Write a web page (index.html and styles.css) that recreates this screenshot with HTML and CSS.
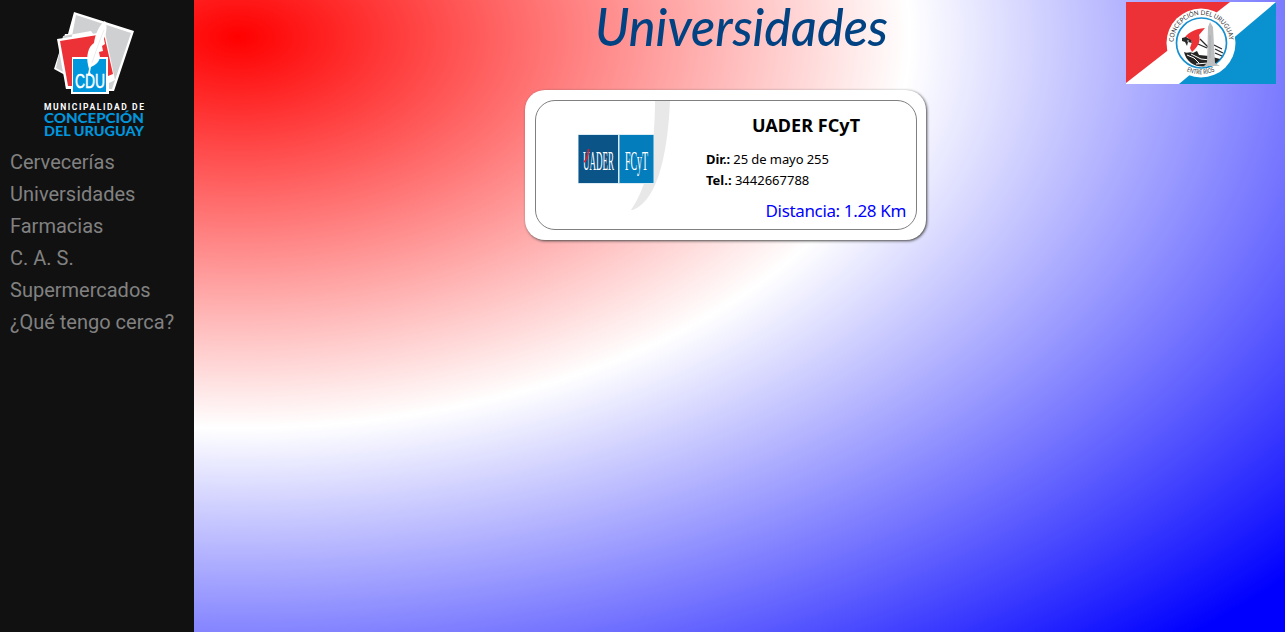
FILE: index.html
```html
<!DOCTYPE html>
<html lang="es">
<head>
<meta charset="utf-8">
<title>Universidades</title>
<link rel="stylesheet" href="styles.css">
</head>
<body>
<div class="page">
  <aside class="sidebar">
    <svg class="logo" viewBox="0 0 120 140" width="120" height="140" role="img" aria-label="Municipalidad de Concepción del Uruguay">
      <path d="M39 7 99 26 77 85 74 90H24V84L29 72 20 67 24 35 32 33Z" fill="#111"/>
      <path d="M39 7 99 26 79 86H73V89H36V84H31L30 70L19 64L30 29L33 29Z" fill="#fff"/>
      <path d="M41 10 96 28 77 84H73V50L56 26 28 31 21 63 30 68Z" fill="#cfd0d2"/>
      <path d="M22 34 70 27 80 75 74 78V89H36V84H31Z" fill="#fff"/>
      <path d="M25 36 69 29 78 69 73 71V52H37V81H33Z" fill="#ed3237"/>
      <path d="M38 54H71V87H38Z" fill="#0096dc"/>
      <path d="M53 60C51 51 53 42 59 38C60 30 64 20 70 16C73 21 71 29 69 34L70 39 67 41 68 46 64 47 65 52C64 58 60 60 56 62L55 67 57 72 53 69 54 64Z" fill="#fff"/>
      <path d="M57 58C60 49 64 37 69 25" fill="none" stroke="#ddd" stroke-width=".6"/>
      <text class="logo-cdu" x="40" y="83" textLength="30" lengthAdjust="spacingAndGlyphs">CDU</text>
      <text class="logo-top" x="9" y="104.500" textLength="100">MUNICIPALIDAD DE</text>
      <text class="logo-name" x="9" y="118" textLength="100" lengthAdjust="spacingAndGlyphs">CONCEPCIÓN</text>
      <text class="logo-name" x="9" y="130.500" textLength="100" lengthAdjust="spacingAndGlyphs">DEL URUGUAY</text>
    </svg>
    <nav class="menu">
      <a>Cervecerías</a>
      <a>Universidades</a>
      <a>Farmacias</a>
      <a>C. A. S.</a>
      <a>Supermercados</a>
      <a>¿Qué tengo cerca?</a>
    </nav>
  </aside>
  <main class="content">
    <header class="header">
      <h1 class="title"><svg viewBox="0 0 320 60" width="320" height="60"><text x="10" y="46" textLength="293" lengthAdjust="spacingAndGlyphs">Universidades</text></svg></h1>
      <svg class="flag" viewBox="0 0 150 82" width="150" height="82" role="img" aria-label="Bandera de Concepción del Uruguay">
        <path d="M0 0H150V82H0Z" fill="#fff"/>
        <path d="M0 0H104L0 81Z" fill="#ed3237"/>
        <path d="M150 0V82H53Z" fill="#0a91cf"/>
        <circle cx="75" cy="41" r="34.500" fill="#fff"/>
        <circle cx="75.500" cy="41" r="25" fill="#fff" stroke="#168fd0" stroke-width="1.700"/>
        <path d="M58 50C62 52 63 49 67 51L71 49 73 53 83 54 94 57C88 65 73 67 65 61C61 58 59 54 58 50Z" fill="#252525"/>
        <path d="M61 53 68 56 73 61M65 52 75 57 84 58M70 62 82 61" fill="none" stroke="#fff" stroke-width="1"/>
        <path d="M74 37 83 46M72 42 81 46M88 43 96 47M89 47 97 51M89 51 96 54" fill="none" stroke="#292929" stroke-width="1.300"/>
        <path d="M57 39C60 31 68 27 79 26L73 33C75 39 72 45 66 50L64 46 66 40 61 35Z" fill="#ed3237"/>
        <path d="m56 36 4-1 5 3 1 3-4-1-1 4-2-4-3-1Z" fill="#292929"/>
        <circle cx="62" cy="39" r=".8" fill="#fff"/>
        <path d="M82 25 84 20 87 25 89 61 94 64H78L81 61Z" fill="#bcbec0"/>
        <path d="M84 33V56" stroke="#aaa"/>
        <path id="arc-top" d="M47.500 41A28 28 0 1 1 103.500 41" fill="none"/>
        <path id="arc-bottom" d="M54 64.500A32 32 0 0 0 96 64.500" fill="none"/>
        <text class="flag-text"><textPath href="#arc-top" startOffset="1" textLength="84" lengthAdjust="spacingAndGlyphs">CONCEPCIÓN DEL URUGUAY</textPath></text>
        <text class="flag-text"><textPath href="#arc-bottom" startOffset="8" textLength="29" lengthAdjust="spacingAndGlyphs">ENTRE RÍOS</textPath></text>
      </svg>
    </header>
    <article class="card">
      <div class="card-inner">
        <svg class="card-logo" viewBox="0 0 120 125" width="120" height="125" role="img" aria-label="UADER FCyT">
          <path d="M95 6H110C108 51 100 104 73 115H71C89 90 95 48 95 6Z" fill="#e8e8e8"/>
          <path d="M18 39H94V89H18Z" fill="#dcecf5"/>
          <path d="M18.500 40H58V88H18.500Z" fill="#0a5487"/>
          <path d="M59.500 40H93.500V88H59.500Z" fill="#047dbc"/>
          <text class="uader" transform="translate(23 75) scale(.66 1.950)" textLength="47" lengthAdjust="spacingAndGlyphs">UADER</text>
          <text class="uader" transform="translate(65 75) scale(.66 1.950)" textLength="35" lengthAdjust="spacingAndGlyphs">FCyT</text>
          <path d="M28.500 54C28 61 27 65 24 67" fill="none" stroke="#e5192a" stroke-width="1.600"/>
        </svg>
        <div class="card-info">
          <h2>UADER FCyT</h2>
          <p class="address"><b>Dir.:</b> 25 de mayo 255</p>
          <p class="phone"><b>Tel.:</b> 3442667788</p>
          <p class="distance">Distancia: 1.28 Km</p>
        </div>
      </div>
    </article>
  </main>
</div>
</body>
</html>
```
FILE: styles.css
```css
* { box-sizing: border-box; }
body { margin: 0; overflow: hidden; }
.page { display: flex; height: 632px; }
.sidebar { width: 194px; flex: none; background: #111; padding-top: 5px; }
.logo { display: block; margin-left: 35px; }
.logo-cdu { font: 21px "Liberation Sans", sans-serif; fill: #fff; stroke: #fff; stroke-width: .5px; }
.logo-top { font: bold 8.5px "Roboto", sans-serif; fill: #fff; }
.logo-name { font: 900 12.5px "Lato", sans-serif; fill: #0096dc; }
.menu { display: flex; flex-direction: column; padding: 1px 10px; }
.menu a { font: 20px/32px Roboto, sans-serif; color: #818181; white-space: nowrap; }
.content { flex: 1; background: radial-gradient(1400px 815px at 44px 37px, red, white 48%, blue); }
.header { height: 90px; display: flex; justify-content: space-between; padding-left: 391px; padding-right: 9px; }
.title { margin: 0; height: 60px; }
.title svg { display: block; overflow: visible; }
.title text { font: italic 500 52px "Lato", sans-serif; fill: #004282; }
.flag { margin-top: 2px; }
.flag-text { font: 6.5px Lato, sans-serif; fill: #333; }
.card { width: 401px; height: 150px; margin-left: 331px; padding: 10px; background: #fff; border-radius: 20px; box-shadow: 1px 1px 3px #444; }
.card-inner { display: flex; height: 130px; width: 382px; border: 1px solid gray; border-radius: 20px; }
.card-logo { margin: -6px 0 0 24px; flex: none; }
.card-info { width: 200px; margin-left: 26px; font: 13px/21px "Noto Sans", sans-serif; }
.card-info h2 { margin: 12px 0 11px; text-align: center; font-size: 18px; line-height: 25px; letter-spacing: .05px; }
.card-info p { margin: 0; }
.address { letter-spacing: -.08px; }
.distance { padding-top: 9px; text-align: right; color: #00f; font-size: 17px; letter-spacing: -.35px; }
.uader { font: 14px "Liberation Serif", serif; fill: #fff; }
```
